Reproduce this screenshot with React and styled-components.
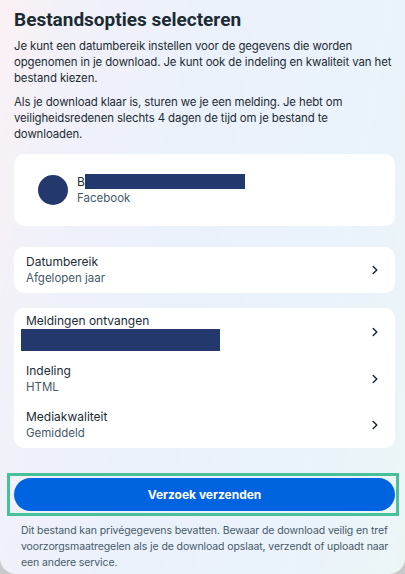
import styled, { createGlobalStyle } from "styled-components";

const Global = createGlobalStyle`
  html, body { margin: 0; padding: 0; }
  body {
    background: #c8c9cb;
    font-family: Inter, "Noto Sans", sans-serif;
    color: #1c2b33;
    -webkit-font-smoothing: antialiased;
  }
  * { box-sizing: border-box; }
`;

const Panel = styled.div`
  width: 405px;
  height: 574px;
  overflow: hidden;
  border-radius: 0 0 16px 16px;
  background: linear-gradient(100deg, #fbf1f4 0%, #f1f1f9 14%, #ebf1fb 40%, #eaf2fc 70%, #ecf5f6 100%);
  padding: 8px 10px 0 14px;
  display: flex;
  flex-direction: column;
`;

const Title = styled.h1`
  margin: 0 0 6px;
  font-family: Roboto, Inter, sans-serif;
  font-size: 19px;
  line-height: 24px;
  font-weight: 700;
`;

const Text = styled.p`
  margin: 0 ${(p) => (p.$wide ? -6 : 0)}px 8px 0;
  font-size: 11.4px;
  line-height: 16px;
  letter-spacing: -0.1px;
  color: #1c2b33;
`;

const Card = styled.div`
  background: #fff;
  border-radius: 10px;
  margin-top: ${(p) => p.$gap || 0}px;
  overflow: hidden;
`;

const Profile = styled.div`
  height: 72px;
  display: flex;
  align-items: center;
  gap: 9px;
  padding-left: 24px;
`;

const Avatar = styled.div`
  width: 30px;
  height: 30px;
  border-radius: 50%;
  background: #23386d;
`;

const Names = styled.div`
  display: flex;
  flex-direction: column;
  margin-top: -1px;
`;

const Name = styled.div`
  position: relative;
  font-size: 12px;
  line-height: 16px;
  height: 16px;
`;

const Redact = styled.span`
  position: absolute;
  background: #23386d;
  left: ${(p) => p.$left}px;
  top: ${(p) => p.$top}px;
  width: ${(p) => p.$w}px;
  height: ${(p) => p.$h}px;
`;

const Sub = styled.div`
  font-size: 11.5px;
  line-height: 16px;
  color: #465a69;
`;

const Row = styled.div`
  position: relative;
  height: ${(p) => p.$h || 46}px;
  display: flex;
  align-items: center;
  justify-content: space-between;
  padding: 0 14px 0 12px;
`;

const RowText = styled.div`
  display: flex;
  flex-direction: column;
  margin-top: ${(p) => p.$shift || 0}px;
`;

const Label = styled.div`
  font-size: 12px;
  line-height: 16px;
  color: #1c2b33;
`;

const Chevron = () => (
  <svg width="12" height="12" viewBox="0 0 12 12" fill="none">
    <path d="M4.2 2.5 7.8 6 4.2 9.5" stroke="#1c2b33" strokeWidth="1.5" strokeLinecap="round" strokeLinejoin="round" />
  </svg>
);

const Focus = styled.div`
  margin: 25px 0 0 -7px;
  width: 392px;
  padding: 2px 1px 2px 4px;
  border: 3px solid #46c19a;
`;

const Button = styled.button`
  width: 100%;
  height: 33px;
  border: none;
  border-radius: 17px;
  background: #0064e0;
  color: #fff;
  font-family: inherit;
  font-size: 12px;
  font-weight: 700;
  cursor: pointer;
`;

const Footer = styled.p`
  margin: 7px 0 0 7px;
  font-size: 10.5px;
  line-height: 16px;
  letter-spacing: -0.1px;
  color: #465a69;
`;

const options = [
  { label: "Datumbereik", value: "Afgelopen jaar" },
];

const settings = [
  { label: "Meldingen ontvangen", value: "", hidden: true, h: 48 },
  { label: "Indeling", value: "HTML", h: 45 },
  { label: "Mediakwaliteit", value: "Gemiddeld", h: 47 },
];

export default function App() {
  return (
    <>
      <Global />
      <Panel>
        <Title>Bestandsopties selecteren</Title>
        <Text $wide>
          Je kunt een datumbereik instellen voor de gegevens die worden
          opgenomen in je download. Je kunt ook de indeling en kwaliteit van het
          bestand kiezen.
        </Text>
        <Text>
          Als je download klaar is, sturen we je een melding. Je hebt om
          veiligheidsredenen slechts 4 dagen de tijd om je bestand te
          downloaden.
        </Text>

        <Card $gap={4}>
          <Profile>
            <Avatar />
            <Names>
              <Name>
                B
                <Redact $left={8} $top={0} $w={160} $h={15} />
              </Name>
              <Sub>Facebook</Sub>
            </Names>
          </Profile>
        </Card>

        <Card $gap={21}>
          {options.map((o) => (
            <Row key={o.label}>
              <RowText>
                <Label>{o.label}</Label>
                <Sub>{o.value}</Sub>
              </RowText>
              <Chevron />
            </Row>
          ))}
        </Card>

        <Card $gap={15}>
          {settings.map((s) => (
            <Row key={s.label} $h={s.h}>
              <RowText $shift={s.hidden ? -6 : 0}>
                <Label>{s.label}</Label>
                <Sub>{s.value || "\u00a0"}</Sub>
              </RowText>
              {s.hidden && <Redact $left={7} $top={21} $w={199} $h={22} />}
              <Chevron />
            </Row>
          ))}
        </Card>

        <Focus>
          <Button>Verzoek verzenden</Button>
        </Focus>
        <Footer>
          Dit bestand kan privégegevens bevatten. Bewaar de download veilig en
          tref voorzorgsmaatregelen als je de download opslaat, verzendt of
          uploadt naar een andere service.
        </Footer>
      </Panel>
    </>
  );
}
